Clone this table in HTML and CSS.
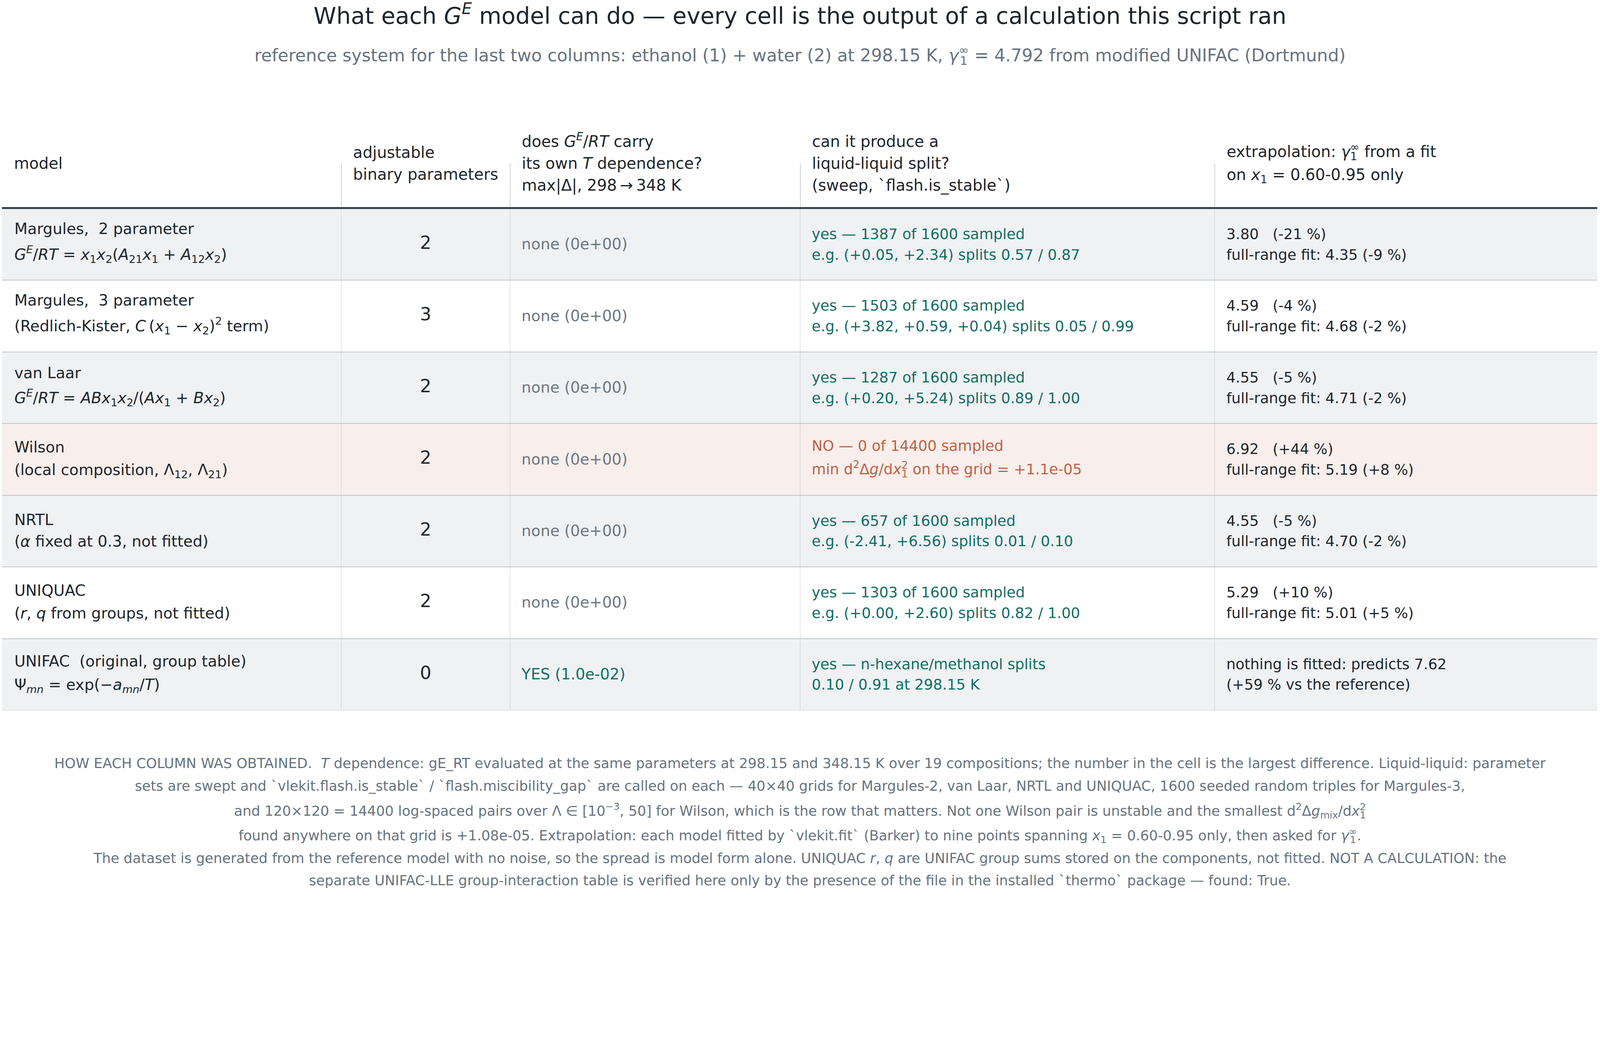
FILE: index.html
```html
<!DOCTYPE html>
<html lang="en">
<head>
<meta charset="utf-8">
<title>What each GE model can do</title>
<link rel="stylesheet" href="styles.css">
</head>
<body>
<main class="page">
  <h1 class="title">What each <i>G</i><sup><i>E</i></sup> model can do — every cell is the output of a calculation this script ran</h1>
  <p class="subtitle">reference system for the last two columns: ethanol (1) + water (2) at 298.15 K, <i>γ</i><span class="ss"><span>∞</span><span>1</span></span> = 4.792 from modified UNIFAC (Dortmund)</p>

  <section class="table">
    <div class="grid head">
      <div class="th"><div class="l">model</div></div>
      <div class="th"><div class="l">adjustable</div><div class="l">binary parameters</div></div>
      <div class="th"><div class="l">does <i>G</i><sup><i>E</i></sup>/<i>RT</i> carry</div><div class="l">its own <i>T</i> dependence?</div><div class="l">max|Δ|, 298&#8201;→&#8201;348 K</div></div>
      <div class="th"><div class="l">can it produce a</div><div class="l">liquid-liquid split?</div><div class="l">(sweep, `flash.is_stable`)</div></div>
      <div class="th"><div class="l h70">extrapolation: <i>γ</i><span class="ss"><span>∞</span><span>1</span></span> from a fit</div><div class="l h70">on <i>x</i><sub>1</sub> = 0.60-0.95 only</div></div>
    </div>

    <div class="grid row">
      <div class="td name"><div class="l">Margules,  2 parameter</div><div class="l h92"><i>G</i><sup><i>E</i></sup>/<i>RT</i> = <i>x</i><sub>1</sub><i>x</i><sub>2</sub>(<i>A</i><sub>21</sub><i>x</i><sub>1</sub> + <i>A</i><sub>12</sub><i>x</i><sub>2</sub>)</div></div>
      <div class="td num"><div class="l">2</div></div>
      <div class="td tdep muted"><div class="l">none (0e+00)</div></div>
      <div class="td ok"><div class="l">yes — 1387 of 1600 sampled</div><div class="l">e.g. (+0.05, +2.34) splits 0.57 / 0.87</div></div>
      <div class="td"><div class="l">3.80   (-21 %)</div><div class="l">full-range fit: 4.35 (-9 %)</div></div>
    </div>

    <div class="grid row white">
      <div class="td name"><div class="l">Margules,  3 parameter</div><div class="l h92">(Redlich-Kister, <i>C</i>&#8201;(<i>x</i><sub>1</sub> − <i>x</i><sub>2</sub>)<sup>2</sup> term)</div></div>
      <div class="td num"><div class="l">3</div></div>
      <div class="td tdep muted"><div class="l">none (0e+00)</div></div>
      <div class="td ok"><div class="l">yes — 1503 of 1600 sampled</div><div class="l">e.g. (+3.82, +0.59, +0.04) splits 0.05 / 0.99</div></div>
      <div class="td"><div class="l">4.59   (-4 %)</div><div class="l">full-range fit: 4.68 (-2 %)</div></div>
    </div>

    <div class="grid row">
      <div class="td name"><div class="l">van Laar</div><div class="l h86"><i>G</i><sup><i>E</i></sup>/<i>RT</i> = <i>ABx</i><sub>1</sub><i>x</i><sub>2</sub>/(<i>Ax</i><sub>1</sub> + <i>Bx</i><sub>2</sub>)</div></div>
      <div class="td num"><div class="l">2</div></div>
      <div class="td tdep muted"><div class="l">none (0e+00)</div></div>
      <div class="td ok"><div class="l">yes — 1287 of 1600 sampled</div><div class="l">e.g. (+0.20, +5.24) splits 0.89 / 1.00</div></div>
      <div class="td"><div class="l">4.55   (-5 %)</div><div class="l">full-range fit: 4.71 (-2 %)</div></div>
    </div>

    <div class="grid row warn">
      <div class="td name"><div class="l">Wilson</div><div class="l h72">(local composition, Λ<sub>12</sub>, Λ<sub>21</sub>)</div></div>
      <div class="td num"><div class="l">2</div></div>
      <div class="td tdep muted"><div class="l">none (0e+00)</div></div>
      <div class="td bad"><div class="l">NO — 0 of 14400 sampled</div><div class="l h82">min d<sup>2</sup>Δ<i>g</i>/d<i>x</i><span class="ss"><span>2</span><span>1</span></span> on the grid = +1.1e-05</div></div>
      <div class="td"><div class="l">6.92   (+44 %)</div><div class="l">full-range fit: 5.19 (+8 %)</div></div>
    </div>

    <div class="grid row">
      <div class="td name"><div class="l">NRTL</div><div class="l h66">(<i>α</i> fixed at 0.3, not fitted)</div></div>
      <div class="td num"><div class="l">2</div></div>
      <div class="td tdep muted"><div class="l">none (0e+00)</div></div>
      <div class="td ok"><div class="l">yes — 657 of 1600 sampled</div><div class="l">e.g. (-2.41, +6.56) splits 0.01 / 0.10</div></div>
      <div class="td"><div class="l">4.55   (-5 %)</div><div class="l">full-range fit: 4.70 (-2 %)</div></div>
    </div>

    <div class="grid row white">
      <div class="td name"><div class="l">UNIQUAC</div><div class="l h72">(<i>r</i>, <i>q</i> from groups, not fitted)</div></div>
      <div class="td num"><div class="l">2</div></div>
      <div class="td tdep muted"><div class="l">none (0e+00)</div></div>
      <div class="td ok"><div class="l">yes — 1303 of 1600 sampled</div><div class="l">e.g. (+0.00, +2.60) splits 0.82 / 1.00</div></div>
      <div class="td"><div class="l">5.29   (+10 %)</div><div class="l">full-range fit: 5.01 (+5 %)</div></div>
    </div>

    <div class="grid row last">
      <div class="td name"><div class="l">UNIFAC  (original, group table)</div><div class="l h78">Ψ<sub><i>mn</i></sub> = exp(−<i>a</i><sub><i>mn</i></sub>/<i>T</i>)</div></div>
      <div class="td num"><div class="l">0</div></div>
      <div class="td tdep ok"><div class="l">YES (1.0e-02)</div></div>
      <div class="td ok"><div class="l">yes — n-hexane/methanol splits</div><div class="l">0.10 / 0.91 at 298.15 K</div></div>
      <div class="td"><div class="l">nothing is fitted: predicts 7.62</div><div class="l">(+59 % vs the reference)</div></div>
    </div>
  </section>

  <footer class="notes">
    <div class="n f66">HOW EACH COLUMN WAS OBTAINED.  <i>T</i> dependence: gE_RT evaluated at the same parameters at 298.15 and 348.15 K over 19 compositions; the number in the cell is the largest difference. Liquid-liquid: parameter</div>
    <div class="n f70">sets are swept and `vlekit.flash.is_stable` / `flash.miscibility_gap` are called on each — 40×40 grids for Margules-2, van Laar, NRTL and UNIQUAC, 1600 seeded random triples for Margules-3,</div>
    <div class="n f80">and 120×120 = 14400 log-spaced pairs over Λ ∈ [10<sup>−3</sup>, 50] for Wilson, which is the row that matters. Not one Wilson pair is unstable and the smallest d<sup>2</sup>Δ<i>g</i><sub>mix</sub>/d<i>x</i><span class="ss"><span>2</span><span>1</span></span></div>
    <div class="n f68">found anywhere on that grid is +1.08e-05. Extrapolation: each model fitted by `vlekit.fit` (Barker) to nine points spanning <i>x</i><sub>1</sub> = 0.60-0.95 only, then asked for <i>γ</i><span class="ss"><span>∞</span><span>1</span></span>.</div>
    <div class="n f68">The dataset is generated from the reference model with no noise, so the spread is model form alone. UNIQUAC <i>r</i>, <i>q</i> are UNIFAC group sums stored on the components, not fitted. NOT A CALCULATION: the</div>
    <div class="n f66">separate UNIFAC-LLE group-interaction table is verified here only by the presence of the file in the installed `thermo` package — found: True.</div>
  </footer>
</main>
</body>
</html>
```

FILE: styles.css
```css
/* The page is laid out in CSS pixels of a 4096 x 2283 viewport
   (photographed at 4808 x 2680). */

html, body {
  margin: 0;
  padding: 0;
  background: #ffffff;
}

body {
  width: 4096px;
  height: 2283px;
  overflow: hidden;
  font-family: "DejaVu Sans", "Noto Sans", sans-serif;
  color: #1d252c;
}

.page {
  width: 4096px;
}

i {
  font-style: italic;
}

sup, sub {
  font-size: 0.7em;
  line-height: 0;
}

sup {
  vertical-align: 0.62em;
}

sub {
  vertical-align: -0.3em;
}

/* stacked super/subscript (e.g. gamma_1^inf) */
.ss {
  display: inline-flex;
  flex-direction: column;
  font-size: 0.7em;
  line-height: 0.86;
  vertical-align: 0.57em;
}

.title {
  margin: 0;
  font-weight: normal;
  font-size: 58.78px;
  line-height: 81.79px;
  text-align: center;
  color: #1d252c;
}

.subtitle {
  margin: 29.82px 0 0;
  font-size: 44.3px;
  line-height: 59.64px;
  text-align: center;
  color: #66737f;
}

.table {
  margin: 135.46px 0 0 5.11px;
  width: 4084.1px;
  font-size: 37.27px;
}

.grid {
  display: grid;
  grid-template-columns: 868.1px 431.9px 742.9px 1061.5px 979.7px;
}

.head {
  height: 223.2px;
  border-bottom: 5.11px solid #36414c;
  font-size: 40.04px;
}

.th {
  display: flex;
  flex-direction: column;
  justify-content: center;
  padding-left: 30.67px;
}

.th + .th {
  background: linear-gradient(#c5ccd2, #c5ccd2) left bottom / 1.7px 50% no-repeat;
}

.l, .n {
  white-space: pre;
}

.th .l {
  line-height: 56.23px;
}

.th .l.h70 {
  line-height: 59.64px;
}

.row {
  height: 181.46px;
  border-bottom: 2.56px solid #bec5ca;
  background: #eff1f3;
}

.row.white {
  background: #ffffff;
}

.row.warn {
  background: #f8eeeb;
}

.row.last {
  border-bottom: 1.7px solid #c6ccd1;
}

.td {
  display: flex;
  flex-direction: column;
  justify-content: center;
  padding: 0 30.67px 0 31.52px;
}

.td + .td {
  border-left: 1.7px solid #c5ccd2;
  padding-left: 28.97px;
}

.td.name {
  font-size: 39.19px;
}

.td.tdep {
  font-size: 39.02px;
}

.td .l {
  line-height: 52.82px;
}

.td .l.h92 { line-height: 78.38px; }
.td .l.h86 { line-height: 73.27px; }
.td .l.h82 { line-height: 69.86px; }
.td .l.h78 { line-height: 66.45px; }
.td .l.h72 { line-height: 61.34px; }
.td .l.h66 { line-height: 56.23px; }

.td.num {
  align-items: center;
  padding: 0 0 8.52px 0;
  font-size: 46px;
}

.td.muted {
  color: #6b7780;
}

.td.ok {
  color: #0f6e63;
}

.td.bad {
  color: #c25e45;
}

.notes {
  margin-top: 108px;
  font-size: 35.5px;
  color: #66737f;
  text-align: center;
}

.n.f66 { line-height: 56.23px; }
.n.f68 { line-height: 57.93px; }
.n.f70 { line-height: 59.64px; }
.n.f80 { line-height: 68.15px; }
```
